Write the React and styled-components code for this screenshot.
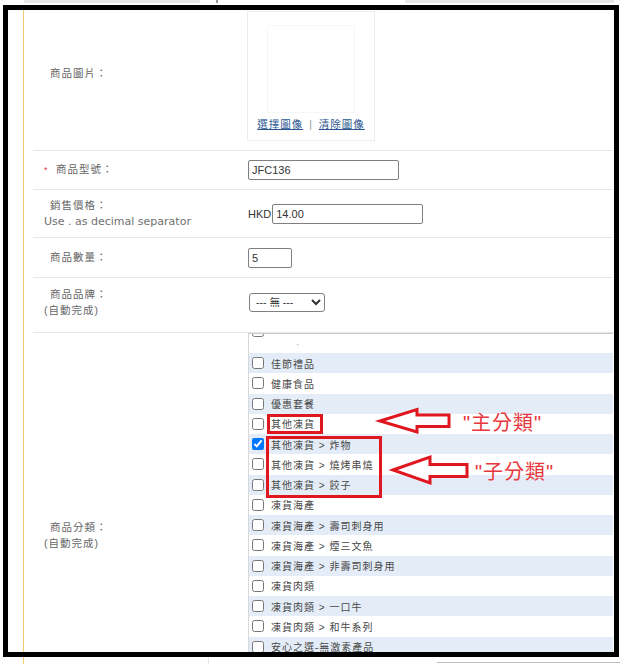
import styled, { createGlobalStyle } from "styled-components"

const GlobalStyle = createGlobalStyle`
html, body { margin: 0; padding: 0; background: #fff; }
body { font-family: "Liberation Sans", "Noto Sans CJK TC", sans-serif; }
`

const Page = styled.div`
width: 623px;
height: 664px;
overflow: hidden;
display: flex;
flex-direction: column;
`

const TopStrip = styled.div`
height: 5px;
display: flex;
align-items: flex-start;
flex-shrink: 0;
`

const StripBlock = styled.div`
margin-left: ${p => p.$ml}px;
width: ${p => p.$w}px;
height: 3px;
background: ${p => p.$bg || "#e8e8e8"};
`

const Frame = styled.div`
position: relative;
box-sizing: border-box;
margin-left: 3px;
width: 616px;
height: 652px;
flex-shrink: 0;
border: 5px solid #000;
overflow: hidden;
display: flex;
background: #fff;
`

const Gutter = styled.div`
width: 15px;
flex-shrink: 0;
`

const YellowRule = styled.div`
width: 1px;
flex-shrink: 0;
background: #efcb72;
`

const FormTable = styled.div`
margin-left: 9px;
width: 580px;
flex-shrink: 0;
display: flex;
flex-direction: column;
`

const Row = styled.div`
display: grid;
grid-template-columns: 207px 1fr;
height: ${p => p.$h}px;
flex-shrink: 0;
border-bottom: ${p => (p.$last ? "none" : "1px solid #e7e7e7")};
`

const LabelCell = styled.div`
display: flex;
flex-direction: column;
justify-content: center;
padding-left: 11px;
padding-bottom: ${p => p.$pb || 0}px;
font-family: "Liberation Sans", "Noto Sans CJK TC", sans-serif;
font-size: 10.5px;
letter-spacing: 1px;
line-height: 16.5px;
color: #666;
`

const LabelLine = styled.div`
display: flex;
align-items: baseline;
white-space: nowrap;
`

const Marker = styled.span`
display: inline-block;
width: ${p => (p.$req ? 12 : 6)}px;
color: #e53935;
font-size: 9px;
letter-spacing: 0;
`

const Hint = styled.div`
font-family: "DejaVu Sans", sans-serif;
font-size: 11px;
letter-spacing: 0;
color: #707070;
white-space: nowrap;
`

const ValueCell = styled.div`
display: flex;
align-items: ${p => p.$align || "center"};
padding-left: 8px;
padding-bottom: ${p => p.$pb || 0}px;
`

const ImageBox = styled.div`
box-sizing: border-box;
margin: 1px 0 0 -1px;
width: 128px;
height: 130px;
border: 1px solid #ececec;
display: flex;
flex-direction: column;
align-items: center;
padding-top: 13px;
gap: 4px;
`

const Placeholder = styled.div`
width: 88px;
height: 88px;
border: 1px solid #f6f6f6;
box-sizing: border-box;
`

const Links = styled.div`
font-size: 10.5px;
letter-spacing: 1px;
line-height: 14px;
color: #999;
white-space: nowrap;
word-spacing: 2px;
a {
    color: #2a5690;
    text-decoration: underline;
}
`

const TextInput = styled.input`
box-sizing: border-box;
width: ${p => p.$w}px;
height: 20px;
margin: 0 0 0 ${p => p.$ml || 0}px;
padding: 0 3px;
border: 1px solid #808080;
border-radius: 2px;
font-family: "Liberation Sans", sans-serif;
font-size: 11px;
color: #333;
background: #fff;
`

const Currency = styled.span`
font-family: "Liberation Sans", sans-serif;
font-size: 11px;
color: #333;
`

const Select = styled.select`
box-sizing: border-box;
width: 76px;
height: 19px;
margin: 0 0 0 1px;
padding: 0 2px;
border: 1px solid #808080;
border-radius: 3px;
font-family: "Liberation Sans", "Noto Sans CJK TC", sans-serif;
font-size: 10.5px;
color: #333;
background: #fff;
`

const ListBox = styled.div`
box-sizing: border-box;
width: 365px;
height: 404px;
overflow: hidden;
border-left: 1px solid #d8d8d8;
border-top: 1px solid #c9c9c9;
display: flex;
flex-direction: column;
`

const StubRow = styled.div`
height: 19px;
flex-shrink: 0;
overflow: hidden;
display: flex;
align-items: flex-start;
padding-left: 3px;
`

const Dot = styled.span`
align-self: flex-end;
margin: 0 0 3px 32px;
font-size: 10px;
line-height: 10px;
color: #aaa;
`

const ItemRow = styled.div`
height: 20.25px;
flex-shrink: 0;
display: flex;
align-items: center;
padding-left: 3px;
background: ${p => (p.$shaded ? "#e4edf7" : "#fff")};
`

const Check = styled.input`
width: 12px;
height: 12px;
margin: ${p => (p.$clip ? "-9px 0 0 0" : "0 7px 0 0")};
flex-shrink: 0;
`

const ItemText = styled.span`
font-family: "Liberation Sans", "Noto Sans CJK TC", sans-serif;
font-size: 10px;
letter-spacing: 1px;
color: #484848;
white-space: nowrap;
`

const Overlay = styled.div`
position: absolute;
inset: 0;
pointer-events: none;
`

const RedBox = styled.div`
position: absolute;
box-sizing: border-box;
left: ${p => p.$x}px;
top: ${p => p.$y}px;
width: ${p => p.$w}px;
height: ${p => p.$h}px;
border: 3px solid #e0171f;
`

const ArrowLayer = styled.svg`
position: absolute;
left: 0;
top: 0;
`

const Callout = styled.span`
position: absolute;
left: ${p => p.$x}px;
top: ${p => p.$y}px;
font-family: "Liberation Sans", "Noto Sans CJK TC", sans-serif;
font-size: 20px;
line-height: 20px;
letter-spacing: 1px;
color: #e8363c;
white-space: nowrap;
`

const BottomStrip = styled.div`
flex: 1;
display: flex;
`

const StripRule = styled.div`
margin-left: ${p => p.$ml}px;
width: ${p => p.$w || 1}px;
height: ${p => (p.$h ? `${p.$h}px` : "auto")};
align-self: ${p => (p.$h ? "flex-end" : "stretch")};
margin-bottom: ${p => (p.$h ? 1 : 0)}px;
background: ${p => p.$bg};
`

const categories = [
    { name: "佳節禮品" },
    { name: "健康食品" },
    { name: "優惠套餐" },
    { name: "其他凍貨" },
    { name: "其他凍貨 > 炸物", checked: true },
    { name: "其他凍貨 > 燒烤串燒" },
    { name: "其他凍貨 > 餃子" },
    { name: "凍貨海產" },
    { name: "凍貨海產 > 壽司刺身用" },
    { name: "凍貨海產 > 煙三文魚" },
    { name: "凍貨海產 > 非壽司刺身用" },
    { name: "凍貨肉類" },
    { name: "凍貨肉類 > 一口牛" },
    { name: "凍貨肉類 > 和牛系列" },
    { name: "安心之選-無激素產品" },
]

function Label({ req, children }) {
    return (
        <LabelLine>
            <Marker $req={req}>{req ? "*" : ""}</Marker>
            {children}
        </LabelLine>
    )
}

export default function App() {
    return (
        <Page>
            <GlobalStyle />
            <TopStrip>
                <StripBlock $ml={24} $w={176} />
                <StripBlock $ml={16} $w={2} $bg="#9a9a9a" />
                <StripBlock $ml={187} $w={209} />
            </TopStrip>
            <Frame>
                <Gutter />
                <YellowRule />
                <FormTable>
                    <Row $h={140}>
                        <LabelCell $pb={14}>
                            <Label>商品圖片：</Label>
                        </LabelCell>
                        <ValueCell $align="flex-start">
                            <ImageBox>
                                <Placeholder />
                                <Links>
                                    <a>選擇圖像</a> | <a>清除圖像</a>
                                </Links>
                            </ImageBox>
                        </ValueCell>
                    </Row>
                    <Row $h={38}>
                        <LabelCell>
                            <Label req>商品型號：</Label>
                        </LabelCell>
                        <ValueCell>
                            <TextInput $w={151} defaultValue="JFC136" />
                        </ValueCell>
                    </Row>
                    <Row $h={47}>
                        <LabelCell>
                            <Label>銷售價格：</Label>
                            <Hint>Use . as decimal separator</Hint>
                        </LabelCell>
                        <ValueCell>
                            <Currency>HKD</Currency>
                            <TextInput $w={151} $ml={1} defaultValue="14.00" />
                        </ValueCell>
                    </Row>
                    <Row $h={39}>
                        <LabelCell>
                            <Label>商品數量：</Label>
                        </LabelCell>
                        <ValueCell>
                            <TextInput $w={44} defaultValue="5" />
                        </ValueCell>
                    </Row>
                    <Row $h={54}>
                        <LabelCell $pb={6}>
                            <Label>商品品牌：</Label>
                            <LabelLine>(自動完成)</LabelLine>
                        </LabelCell>
                        <ValueCell $pb={6}>
                            <Select defaultValue="">
                                <option value="">--- 無 ---</option>
                            </Select>
                        </ValueCell>
                    </Row>
                    <Row $h={404} $last>
                        <LabelCell>
                            <Label>商品分類：</Label>
                            <LabelLine>(自動完成)</LabelLine>
                        </LabelCell>
                        <ValueCell $align="flex-start">
                            <ListBox>
                                <StubRow>
                                    <Check type="checkbox" $clip />
                                    <Dot>·</Dot>
                                </StubRow>
                                {categories.map((c, i) => (
                                    <ItemRow key={c.name} $shaded={i % 2 === 0}>
                                        <Check type="checkbox" defaultChecked={!!c.checked} />
                                        <ItemText>{c.name}</ItemText>
                                    </ItemRow>
                                ))}
                            </ListBox>
                        </ValueCell>
                    </Row>
                </FormTable>
                <Overlay>
                    <RedBox $x={259} $y={404} $w={56} $h={20} />
                    <RedBox $x={258} $y={426} $w={116} $h={62} />
                    <ArrowLayer width="606" height="642" viewBox="0 0 606 642">
                        <g transform="translate(-8,-10)" fill="#fff" stroke="#e0171f" strokeWidth="3" strokeLinejoin="miter">
                            <polygon points="380,421 417,409.5 417,415 449,415 449,426.5 417,426.5 417,432" />
                            <polygon points="393,470 430,457 430,464.5 467,464.5 467,476.5 430,476.5 430,483" />
                        </g>
                    </ArrowLayer>
                    <Callout $x={455} $y={403}>"主分類"</Callout>
                    <Callout $x={467} $y={452}>"子分類"</Callout>
                </Overlay>
            </Frame>
            <BottomStrip>
                <StripRule $ml={23} $bg="#efcb72" />
                <StripRule $ml={184} $bg="#e6e6e6" />
                <StripRule $ml={228} $w={183} $h={1} $bg="#bdbdbd" />
            </BottomStrip>
        </Page>
    )
}
